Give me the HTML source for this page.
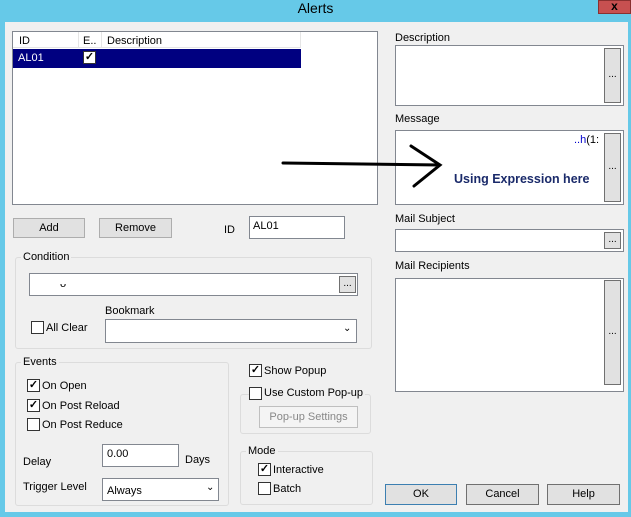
<!DOCTYPE html>
<html><head><style>
*{box-sizing:border-box;margin:0;padding:0}
body{width:631px;height:517px;background:#66c9e8;position:relative;overflow:hidden;font-family:"Liberation Sans",sans-serif;font-size:11px;color:#000}
.a{position:absolute}
.client{left:5px;top:22px;width:623px;height:490px;background:#f0f0f0}
.box{background:#fff;border:1px solid #828790}
.btn{background:#e1e1e1;border:1px solid #adadad;text-align:center}
.grp{border:1px solid #dcdcdc;border-radius:3px}
.lg{background:#f0f0f0;padding:0 2px}
.cb{width:13px;height:13px;border:1px solid #333;background:#fff;font-size:11px;line-height:11px;text-align:center;font-weight:bold}
.dots{width:17px;background:#e1e1e1;border:1px solid #707070;font-size:10px;text-align:center}
</style></head><body>
<div class="a" style="left:0;top:0;width:631px;text-align:center;font-size:14px;line-height:16px;color:#000">Alerts</div>
<div class="a" style="left:598px;top:0;width:33px;height:14px;background:#c75050;color:#000;font-weight:bold;text-align:center;font-size:12px;line-height:10px;border:1px solid #8a3030">x</div>
<div class="a client"></div>

<div class="a box" style="left:12px;top:31px;width:366px;height:174px"></div>
<div class="a" style="left:13px;top:32px;width:288px;height:16px;border-bottom:1px solid #e5e5e5;background:#fff"></div>
<div class="a" style="left:78px;top:32px;width:1px;height:16px;background:#e5e5e5"></div>
<div class="a" style="left:101px;top:32px;width:1px;height:16px;background:#e5e5e5"></div>
<div class="a" style="left:300px;top:32px;width:1px;height:16px;background:#e5e5e5"></div>
<div class="a" style="left:19px;top:35px">ID</div>
<div class="a" style="left:83px;top:35px">E..</div>
<div class="a" style="left:107px;top:35px">Description</div>
<div class="a" style="left:13px;top:49px;width:288px;height:19px;background:#000080"></div>
<div class="a" style="left:18px;top:52px;color:#fff">AL01</div>
<div class="a cb" style="left:83px;top:51px">✓</div>

<div class="a btn" style="left:13px;top:218px;width:72px;height:20px;line-height:18px">Add</div>
<div class="a btn" style="left:99px;top:218px;width:73px;height:20px;line-height:18px">Remove</div>
<div class="a" style="left:224px;top:224px">ID</div>
<div class="a box" style="left:249px;top:216px;width:96px;height:23px;padding:3px">AL01</div>

<div class="a grp" style="left:15px;top:257px;width:357px;height:92px"></div>
<div class="a lg" style="left:21px;top:251px">Condition</div>
<div class="a box" style="left:29px;top:273px;width:329px;height:23px;padding:4px 0 0 30px">ᴗ</div>
<div class="a dots" style="left:339px;top:276px;height:17px;line-height:14px">...</div>
<div class="a cb" style="left:31px;top:321px"></div>
<div class="a" style="left:46px;top:322px">All Clear</div>
<div class="a" style="left:105px;top:305px">Bookmark</div>
<div class="a box" style="left:105px;top:319px;width:252px;height:24px"></div>
<div class="a" style="left:343px;top:323px;font-size:10px">⌄</div>

<div class="a grp" style="left:15px;top:362px;width:214px;height:144px"></div>
<div class="a lg" style="left:21px;top:356px">Events</div>
<div class="a cb" style="left:27px;top:379px">✓</div><div class="a" style="left:42px;top:380px">On Open</div>
<div class="a cb" style="left:27px;top:399px">✓</div><div class="a" style="left:42px;top:400px">On Post Reload</div>
<div class="a cb" style="left:27px;top:418px"></div><div class="a" style="left:42px;top:419px">On Post Reduce</div>
<div class="a" style="left:23px;top:456px">Delay</div>
<div class="a box" style="left:102px;top:444px;width:77px;height:23px;padding:3px 4px">0.00</div>
<div class="a" style="left:185px;top:454px">Days</div>
<div class="a" style="left:23px;top:481px">Trigger Level</div>
<div class="a box" style="left:102px;top:478px;width:117px;height:23px;padding:6px 4px">Always</div>
<div class="a" style="left:206px;top:482px;font-size:10px">⌄</div>

<div class="a cb" style="left:249px;top:364px">✓</div><div class="a" style="left:264px;top:365px">Show Popup</div>
<div class="a grp" style="left:240px;top:394px;width:131px;height:40px"></div>
<div class="a cb" style="left:249px;top:387px"></div><div class="a lg" style="left:262px;top:387px">Use Custom Pop-up</div>
<div class="a btn" style="left:259px;top:406px;width:99px;height:22px;line-height:20px;color:#888;border-color:#bfbfbf;background:#f4f4f4">Pop-up Settings</div>
<div class="a grp" style="left:240px;top:451px;width:133px;height:54px"></div>
<div class="a lg" style="left:246px;top:445px">Mode</div>
<div class="a cb" style="left:258px;top:463px">✓</div><div class="a" style="left:273px;top:464px">Interactive</div>
<div class="a cb" style="left:258px;top:482px"></div><div class="a" style="left:273px;top:483px">Batch</div>

<div class="a" style="left:395px;top:32px">Description</div>
<div class="a box" style="left:395px;top:45px;width:229px;height:61px"></div>
<div class="a dots" style="left:604px;top:48px;height:55px;line-height:52px">...</div>
<div class="a" style="left:395px;top:113px">Message</div>
<div class="a box" style="left:395px;top:130px;width:229px;height:75px"></div>
<div class="a dots" style="left:604px;top:133px;height:69px;line-height:66px">...</div>
<div class="a" style="left:574px;top:134px;color:#00c">..h<span style="color:#000">(1:</span></div>
<div class="a" style="left:395px;top:213px">Mail Subject</div>
<div class="a box" style="left:395px;top:229px;width:229px;height:23px"></div>
<div class="a dots" style="left:604px;top:232px;height:17px;line-height:14px">...</div>
<div class="a" style="left:395px;top:260px">Mail Recipients</div>
<div class="a box" style="left:395px;top:278px;width:229px;height:114px"></div>
<div class="a dots" style="left:604px;top:280px;height:105px;line-height:102px">...</div>

<div class="a btn" style="left:385px;top:484px;width:72px;height:21px;line-height:19px;border-color:#3c7fb1">OK</div>
<div class="a btn" style="left:466px;top:484px;width:73px;height:21px;line-height:19px;border-color:#707070">Cancel</div>
<div class="a btn" style="left:547px;top:484px;width:73px;height:21px;line-height:19px;border-color:#707070">Help</div>

<svg class="a" style="left:0;top:0" width="631" height="517"><path d="M283 163 L440 165 M411 146 L440 165 L414 186" stroke="#000" stroke-width="3" fill="none" stroke-linecap="round"/></svg>
<div class="a" style="left:454px;top:172px;font-weight:bold;font-size:12.5px;color:#1a2a6a;text-shadow:0 0 2px #fff,0 0 2px #fff">Using Expression here</div>
</body></html>
